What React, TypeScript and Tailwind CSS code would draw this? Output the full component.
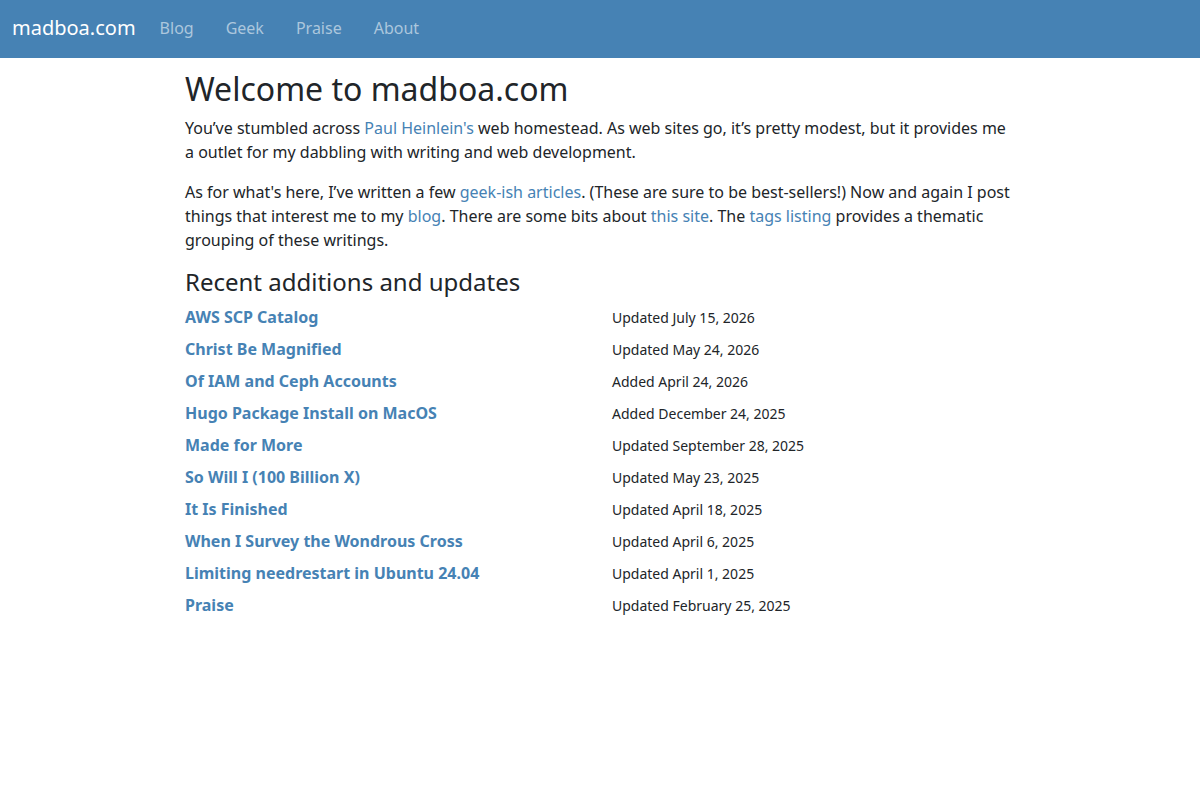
import React from "react";

const items: [string, string][] = [
  ["AWS SCP Catalog", "Updated July 15, 2026"],
  ["Christ Be Magnified", "Updated May 24, 2026"],
  ["Of IAM and Ceph Accounts", "Added April 24, 2026"],
  ["Hugo Package Install on MacOS", "Added December 24, 2025"],
  ["Made for More", "Updated September 28, 2025"],
  ["So Will I (100 Billion X)", "Updated May 23, 2025"],
  ["It Is Finished", "Updated April 18, 2025"],
  ["When I Survey the Wondrous Cross", "Updated April 6, 2025"],
  ["Limiting needrestart in Ubuntu 24.04", "Updated April 1, 2025"],
  ["Praise", "Updated February 25, 2025"],
];

function A({ children }: { children: React.ReactNode }) {
  return <a href="#" className="text-[#4682b4] no-underline">{children}</a>;
}

export default function App() {
  return (
    <div className="min-h-[800px] bg-white text-[#212529] [font-family:'Noto_Sans',sans-serif]">
      <nav className="h-[58px] bg-[#4682b4] flex items-center px-3 pb-[2px]">
        <a href="#" className="text-white text-[20px] leading-[30px] mr-[24px]">madboa.com</a>
        <div className="flex gap-[32px] text-[16px] leading-6 text-[#acc7dd]">
          <a href="#">Blog</a>
          <a href="#">Geek</a>
          <a href="#">Praise</a>
          <a href="#">About</a>
        </div>
      </nav>
      <main className="w-[830px] mx-auto pt-3">
        <h1 className="text-[32px] leading-[1.2] font-normal mb-2">Welcome to madboa.com</h1>
        <p className="text-[16px] leading-6 mb-4">
          You’ve stumbled across <A>Paul Heinlein's</A> web homestead. As web sites go, it’s pretty modest, but it provides me a outlet for my dabbling with writing and web development.
        </p>
        <p className="text-[16px] leading-6 mb-4">
          As for what's here, I’ve written a few <A>geek-ish articles</A>. (These are sure to be best-sellers!) Now and again I post things that interest me to my <A>blog</A>. There are some bits about <A>this site</A>. The <A>tags listing</A> provides a thematic grouping of these writings.
        </p>
        <h2 className="text-[24px] leading-[1.2] font-normal mb-2">Recent additions and updates</h2>
        <div className="flex flex-col">
          {items.map(([t, d]) => (
            <div key={t} className="grid grid-cols-2 gap-6 mb-2 h-6 items-baseline overflow-visible">
              <a href="#" className="text-[#4682b4] font-bold text-[16px] leading-6">{t}</a>
              <span className="text-[14px] leading-6">{d}</span>
            </div>
          ))}
        </div>
      </main>
    </div>
  );
}
